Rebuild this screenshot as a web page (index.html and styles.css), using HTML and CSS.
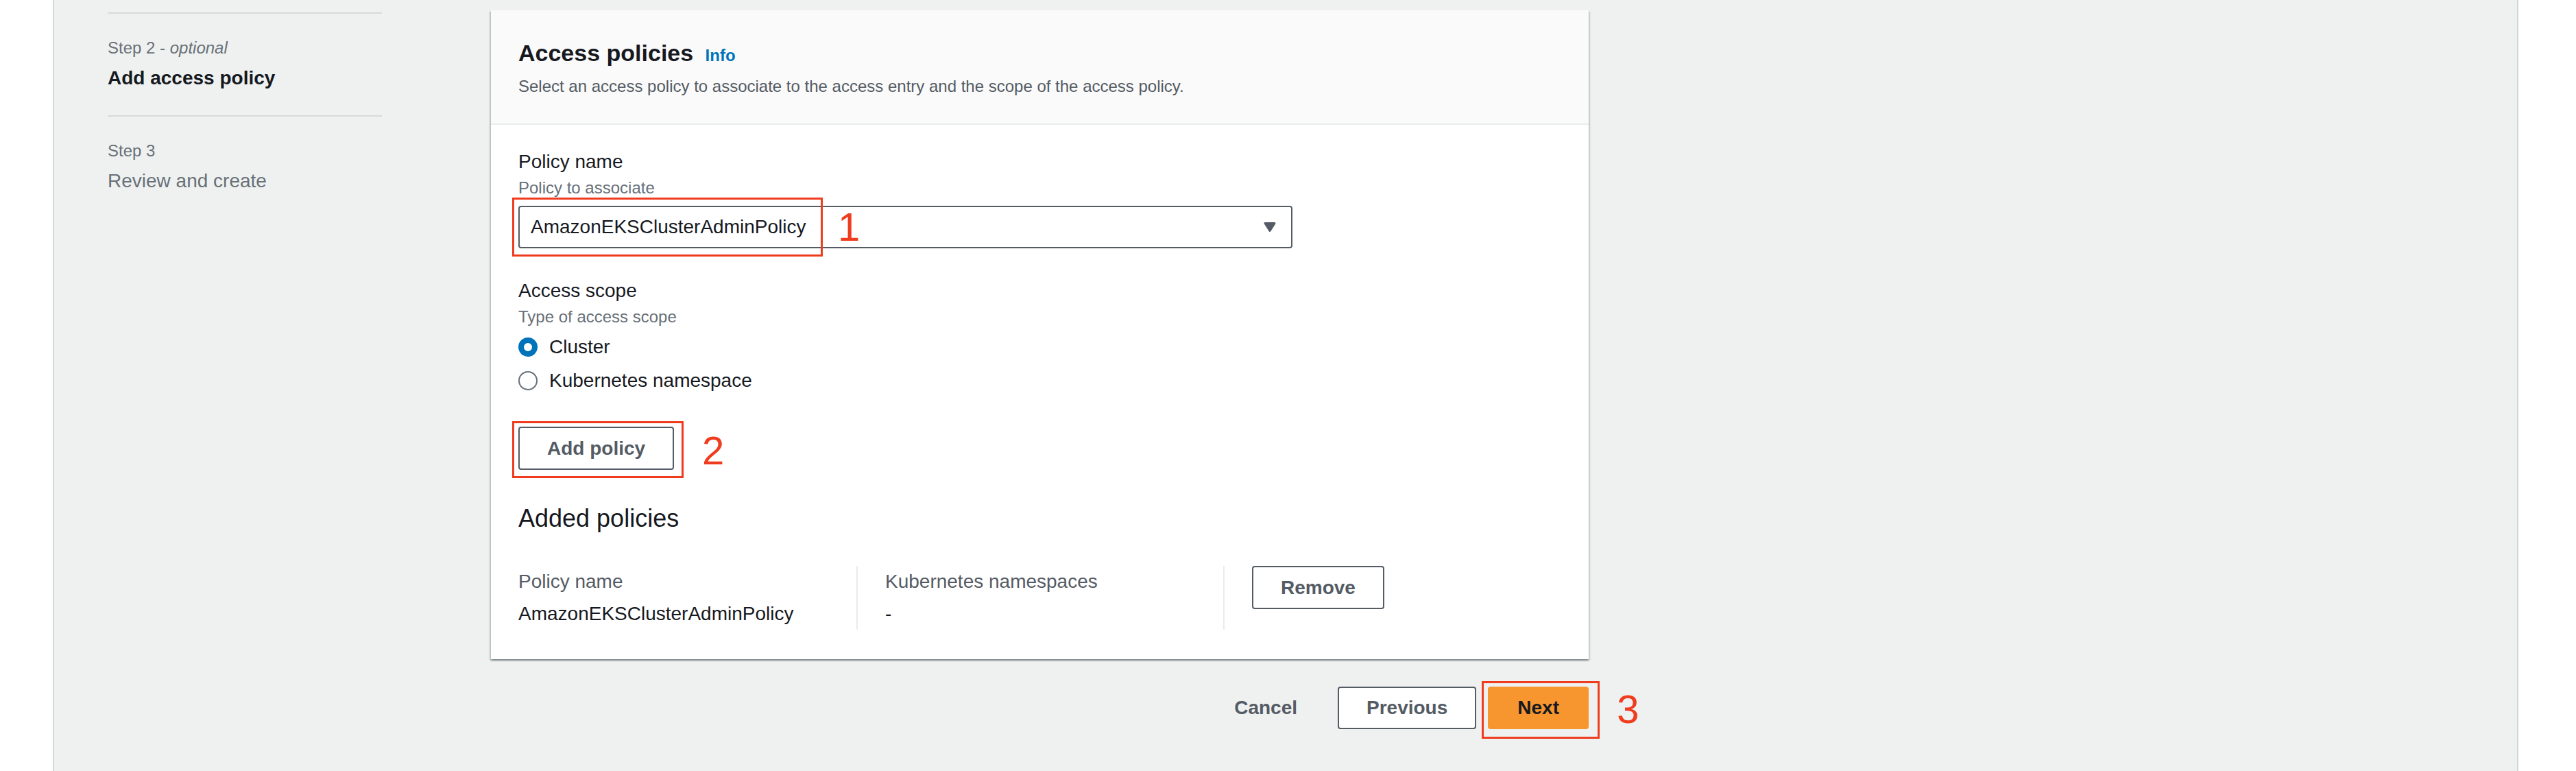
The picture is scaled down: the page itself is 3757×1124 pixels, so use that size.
FILE: index.html
```html
<!DOCTYPE html>
<html lang="en">
<head>
  <meta charset="UTF-8">
  <title>Add access policy</title>
  <link rel="stylesheet" href="styles.css">
</head>
<body>

  <div class="console">
    <nav class="wizard-nav">
      <div class="step">
        <div class="step-num">Step 2 - <i>optional</i></div>
        <div class="step-title current">Add access policy</div>
      </div>
      <div class="step">
        <div class="step-num">Step 3</div>
        <div class="step-title">Review and create</div>
      </div>
    </nav>

    <main class="content">
      <section class="card">
        <header class="card-header">
          <h2>Access policies <a class="info" href="#">Info</a></h2>
          <p class="card-desc">Select an access policy to associate to the access entry and the scope of the access policy.</p>
        </header>

        <div class="card-body">
          <div class="field-label">Policy name</div>
          <div class="field-desc">Policy to associate</div>
          <div class="marked">
            <div class="select">
              <span>AmazonEKSClusterAdminPolicy</span>
              <svg class="caret" width="20" height="16" viewBox="0 0 20 16">
                <path d="M3 2.5h14l-7 11z" fill="#545b64" stroke="#545b64" stroke-width="3" stroke-linejoin="round"/>
              </svg>
            </div>
            <span class="callout callout-1"></span>
            <span class="callout-num num-1">1</span>
          </div>

          <div class="field-label scope-label">Access scope</div>
          <div class="field-desc">Type of access scope</div>
          <div class="radios">
            <label class="radio-row"><span class="radio checked"></span>Cluster</label>
            <label class="radio-row"><span class="radio"></span>Kubernetes namespace</label>
          </div>

          <div class="marked add-wrap">
            <button class="btn">Add policy</button>
            <span class="callout callout-2"></span>
            <span class="callout-num num-2">2</span>
          </div>

          <h3>Added policies</h3>

          <div class="policy-table">
            <div class="cell">
              <div class="col-head">Policy name</div>
              <div class="col-value">AmazonEKSClusterAdminPolicy</div>
            </div>
            <div class="cell divided">
              <div class="col-head">Kubernetes namespaces</div>
              <div class="col-value">-</div>
            </div>
            <div class="cell divided action">
              <button class="btn">Remove</button>
            </div>
          </div>
        </div>
      </section>

      <div class="actions">
        <button class="btn link">Cancel</button>
        <button class="btn">Previous</button>
        <span class="marked">
          <button class="btn primary">Next</button>
          <span class="callout callout-3"></span>
          <span class="callout-num num-3">3</span>
        </span>
      </div>
    </main>
  </div>

</body>
</html>
```

FILE: styles.css
```css
body {
  margin: 0;
  background: #ffffff;
  font-family: "Liberation Sans", Arial, sans-serif;
  font-size: 28px;
  color: #16191f;
  overflow: hidden;
}

.console {
  display: flex;
  box-sizing: border-box;
  margin-left: 77px;
  width: 3596px;
  height: 1124px;
  background: #eff1f0;
  border-left: 2px solid #d3d6d6;
  border-right: 2px solid #d3d6d6;
}

/* left steps */
.wizard-nav {
  flex-shrink: 0;
  width: 400px;
  margin-left: 78px;
  margin-top: 18px;
}

.step {
  border-top: 2px solid #d5dbdb;
  padding: 34px 0 34px;
}

.step-num {
  font-size: 24px;
  line-height: 32px;
  color: #687078;
}

.step-title {
  margin-top: 8px;
  line-height: 40px;
  color: #687078;
}

.step-title.current {
  color: #16191f;
  font-weight: bold;
}

/* main column */
.content {
  flex-shrink: 0;
  width: 1601px;
  margin-left: 159px;
  margin-top: 15px;
}

.card {
  background: #ffffff;
  box-shadow: 0 2px 2px 0 rgba(0, 28, 36, 0.3), 2px 2px 2px 0 rgba(0, 28, 36, 0.15), -2px 2px 2px 0 rgba(0, 28, 36, 0.15);
}

.card-header {
  background: #fafafa;
  border-bottom: 2px solid #eaeded;
  padding: 40px 40px 38px;
}

.card-header h2 {
  margin: 0;
  font-size: 34px;
  line-height: 44px;
  font-weight: bold;
}

.info {
  margin-left: 8px;
  font-size: 24px;
  color: #0073bb;
  text-decoration: none;
}

.card-desc {
  margin: 7px 0 0;
  font-size: 24px;
  line-height: 32px;
  color: #545b64;
}

.card-body {
  padding: 34px 40px 43px;
}

.field-label {
  line-height: 40px;
}

.scope-label {
  margin-top: 42px;
}

.field-desc {
  margin-top: 2px;
  font-size: 24px;
  line-height: 32px;
  color: #687078;
}

.marked {
  position: relative;
}

.card-body .marked {
  margin-top: 10px;
  width: 1129px;
}

.select {
  box-sizing: border-box;
  display: flex;
  align-items: center;
  justify-content: space-between;
  height: 62px;
  padding: 0 21px 0 16px;
  border: 2px solid #545b64;
  border-radius: 4px;
  background: #ffffff;
}

/* annotation boxes */
.callout {
  position: absolute;
  box-sizing: border-box;
  border: 3px solid #f03c1e;
}

.callout-1 {
  left: -9px;
  top: -12px;
  width: 453px;
  height: 86px;
}

.callout-2 {
  left: -9px;
  top: -8px;
  width: 250px;
  height: 83px;
}

.callout-3 {
  left: -9px;
  top: -8px;
  width: 172px;
  height: 84px;
}

.callout-num {
  position: absolute;
  font-family: "Liberation Sans Narrow", "Liberation Sans", Arial, sans-serif;
  font-size: 58px;
  line-height: 58px;
  color: #f03c1e;
}

.num-1 {
  left: 466px;
  top: 2px;
}

.num-2 {
  left: 268px;
  top: 6px;
}

.num-3 {
  left: 188px;
  top: 4px;
}

.radios {
  margin-top: 8px;
}

.radio-row {
  display: flex;
  align-items: center;
  gap: 17px;
  line-height: 40px;
}

.radio-row + .radio-row {
  margin-top: 9px;
}

.radio {
  box-sizing: border-box;
  width: 28px;
  height: 28px;
  border: 2px solid #687078;
  border-radius: 50%;
  background: #ffffff;
}

.radio.checked {
  border: 8px solid #0073bb;
}

.btn {
  box-sizing: border-box;
  height: 63px;
  padding: 0 40px;
  border: 2px solid #545b64;
  border-radius: 4px;
  background: #ffffff;
  color: #545b64;
  font-family: inherit;
  font-size: 28px;
  font-weight: bold;
  cursor: pointer;
}

.card-body .add-wrap {
  margin-top: 47px;
}

h3 {
  margin: 49px 0 0;
  font-size: 36px;
  line-height: 44px;
  font-weight: normal;
}

.policy-table {
  display: grid;
  grid-template-columns: 493px 535px auto;
  margin-top: 47px;
}

.cell {
  padding: 3px 0 3px;
}

.cell.divided {
  border-left: 2px solid #eaeded;
  padding-left: 40px;
}

.cell.action {
  padding-top: 0;
}

.col-head {
  line-height: 40px;
  color: #545b64;
}

.col-value {
  margin-top: 7px;
  line-height: 40px;
}

/* footer buttons */
.actions {
  display: flex;
  justify-content: flex-end;
  align-items: center;
  gap: 17px;
  margin-top: 40px;
}

.actions .btn {
  height: 62px;
}

.btn.link {
  border-color: transparent;
  background: transparent;
}

.btn.primary {
  border-color: #f7952f;
  background: #f7952f;
  color: #16191f;
  padding: 0 41px;
}
```
